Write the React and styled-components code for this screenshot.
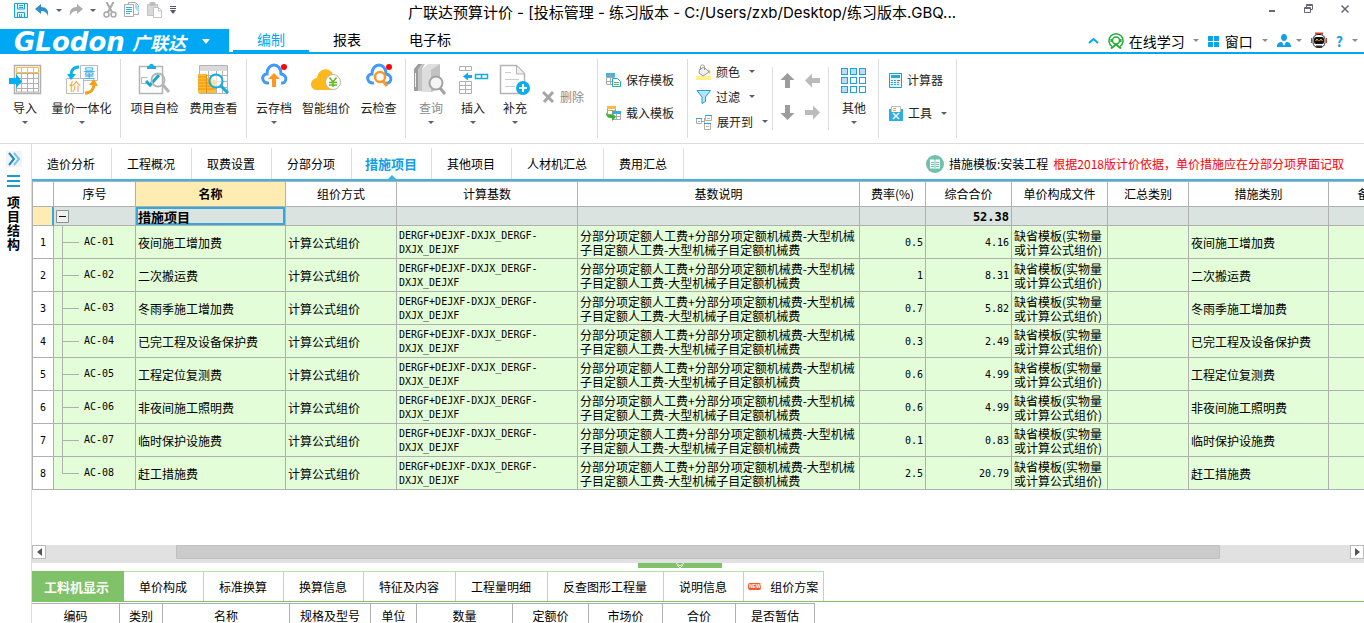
import React, { useState } from 'react';
import styled, { createGlobalStyle } from 'styled-components';

const RIBBON_TABS = ['编制', '报表', '电子标'];

const SHEET_TABS = ['造价分析', '工程概况', '取费设置', '分部分项', '措施项目', '其他项目', '人材机汇总', '费用汇总'];

const DETAIL_TABS = ['工料机显示', '单价构成', '标准换算', '换算信息', '特征及内容', '工程量明细', '反查图形工程量', '说明信息', '组价方案'];

const COLUMNS = [
  { title: '', width: 22 },
  { title: '序号', width: 82 },
  { title: '名称', width: 150, active: true },
  { title: '组价方式', width: 111 },
  { title: '计算基数', width: 181 },
  { title: '基数说明', width: 282 },
  { title: '费率(%)', width: 66 },
  { title: '综合合价', width: 86 },
  { title: '单价构成文件', width: 96 },
  { title: '汇总类别', width: 81 },
  { title: '措施类别', width: 140 },
  { title: '备注', width: 82 },
];

const ROWS = [
  { code: 'AC-01', name: '夜间施工增加费', rate: '0.5', total: '4.16' },
  { code: 'AC-02', name: '二次搬运费', rate: '1', total: '8.31' },
  { code: 'AC-03', name: '冬雨季施工增加费', rate: '0.7', total: '5.82' },
  { code: 'AC-04', name: '已完工程及设备保护费', rate: '0.3', total: '2.49' },
  { code: 'AC-05', name: '工程定位复测费', rate: '0.6', total: '4.99' },
  { code: 'AC-06', name: '非夜间施工照明费', rate: '0.6', total: '4.99' },
  { code: 'AC-07', name: '临时保护设施费', rate: '0.1', total: '0.83' },
  { code: 'AC-08', name: '赶工措施费', rate: '2.5', total: '20.79' },
];

const DETAIL_COLUMNS = [
  ['编码', 88],
  ['类别', 43],
  ['名称', 127],
  ['规格及型号', 81],
  ['单位', 46],
  ['数量', 96],
  ['定额价', 76],
  ['市场价', 74],
  ['合价', 73],
  ['是否暂估', 79],
];

const App = () => {
  const [ribbonTab, setRibbonTab] = useState('编制');
  const [sheetTab, setSheetTab] = useState('措施项目');
  const [detailTab, setDetailTab] = useState('工料机显示');

  return (
    <Window>
      <GlobalStyle />
      <TitleBar>
        <QuickAccess>
          <IconButton aria-label="保存"><SaveIcon /></IconButton>
          <IconButton aria-label="撤销"><UndoIcon color="#2b8fd0" /></IconButton>
          <IconButton aria-label="撤销列表"><Caret /></IconButton>
          <IconButton aria-label="恢复"><RedoIcon /></IconButton>
          <IconButton aria-label="恢复列表"><Caret /></IconButton>
          <IconButton aria-label="剪切"><CutIcon /></IconButton>
          <IconButton aria-label="复制"><CopyIcon /></IconButton>
          <IconButton aria-label="粘贴"><PasteIcon /></IconButton>
          <IconButton aria-label="自定义"><MoreIcon /></IconButton>
        </QuickAccess>
        <Title>广联达预算计价 - [投标管理 - 练习版本 - C:/Users/zxb/Desktop/练习版本.GBQ...</Title>
        <WindowButtons>
          <IconButton aria-label="最小化">
            <svg width="10" height="10"><path d="M1 7h6" stroke="#667" strokeWidth="2" /></svg>
          </IconButton>
          <IconButton aria-label="还原">
            <svg width="10" height="10" fill="none" stroke="#667"><path d="M2.5 3V.5h6v5H7M.5 3.5h6v5h-6zM.5 4.5h6M2.5 1.5h6" /></svg>
          </IconButton>
          <IconButton aria-label="关闭">
            <svg width="10" height="10"><path d="M1.500 1.500l7 7m0-7l-7 7" stroke="#667" strokeWidth="1.500" /></svg>
          </IconButton>
        </WindowButtons>
      </TitleBar>

      <MenuBar>
        <Brand>
          <BrandLatin>GLodon</BrandLatin>
          <BrandChinese>广联达</BrandChinese>
          <BrandCaret width="8" height="5"><path d="M0 0h8l-4 5z" fill="#fff" /></BrandCaret>
        </Brand>
        <RibbonTabs>
          {RIBBON_TABS.map((tab) => (
            <RibbonTab key={tab} $active={tab === ribbonTab} onClick={() => setRibbonTab(tab)}>{tab}</RibbonTab>
          ))}
        </RibbonTabs>
        <Tools>
          <Tool aria-label="收起功能区">
            <svg width="11" height="7"><path d="M1 6l4.500-4L10 6" fill="none" stroke="#00a8f3" strokeWidth="2" /></svg>
          </Tool>
          <Tool><HeadsetIcon />在线学习<Caret $light $gap={3} /></Tool>
          <Tool>
            <svg width="12" height="12" fill="#0aa5ef"><path d="M0 1h5v5H0zM6 1h5v5H6zM0 7h5v5H0zM6 7h5v5H6z" /></svg>
            窗口<Caret $light $gap={4} />
          </Tool>
          <Tool aria-label="用户"><UserIcon /><Caret $light /></Tool>
          <Tool aria-label="助手"><RobotIcon /></Tool>
          <Tool aria-label="帮助"><Question>?</Question><Caret $light $gap={4} /></Tool>
        </Tools>
      </MenuBar>

      <Ribbon>
        <Group>
          <BigButton $width={42}><ImportIcon /><Label>导入</Label><Caret /></BigButton>
          <BigButton $width={71}><PriceIcon /><Label>量价一体化</Label><Caret /></BigButton>
        </Group>
        <Group>
          <BigButton $width={59}><CheckIcon /><Label>项目自检</Label></BigButton>
          <BigButton $width={59}><FeeIcon /><Label>费用查看</Label></BigButton>
        </Group>
        <Group>
          <BigButton $width={46}><CloudIcon mark="arrow" /><Label>云存档</Label><Caret /></BigButton>
          <BigButton $width={58}><SmartIcon /><Label>智能组价</Label></BigButton>
          <BigButton $width={47}><CloudIcon mark="search" /><Label>云检查</Label></BigButton>
        </Group>
        <Group>
          <BigButton $width={42} $muted><BooksIcon /><Label>查询</Label><Caret /></BigButton>
          <BigButton $width={42}><InsertIcon /><Label>插入</Label><Caret /></BigButton>
          <BigButton $width={42}><AddIcon /><Label>补充</Label><Caret /></BigButton>
          <Stack $width={58} $indent={6}>
            <SmallButton $muted>
              <svg width="13" height="14"><path d="M1 2l10 10M11 2L2 12" stroke="#a5a5a5" strokeWidth="3" /></svg>
              删除
            </SmallButton>
          </Stack>
        </Group>
        <Group>
          <Stack $width={82} $gap={17} $indent={4}>
            <SmallButton><SaveTemplateIcon />保存模板</SmallButton>
            <SmallButton><LoadTemplateIcon />载入模板</SmallButton>
          </Stack>
        </Group>
        <Group $short>
          <Stack $width={77} $gap={9} $indent={4}>
            <SmallButton><BucketIcon />颜色<Caret $gap={4} /></SmallButton>
            <SmallButton>
              <svg width="15" height="16"><path d="M1 1.500h13.500L9.500 8v4.500L6 14.500V8z" fill="#b9e3f5" stroke="#18a4dd" /></svg>
              过滤<Caret $gap={4} />
            </SmallButton>
            <SmallButton><ExpandIcon />展开到<Caret $gap={4} /></SmallButton>
          </Stack>
        </Group>
        <Group $short>
          <ArrowPad>
            <IconButton aria-label="上移"><MoveIcon angle={0} color="#9c9c9c" /></IconButton>
            <IconButton aria-label="升级"><MoveIcon angle={-90} color="#bbb" /></IconButton>
            <IconButton aria-label="下移"><MoveIcon angle={180} color="#9c9c9c" /></IconButton>
            <IconButton aria-label="降级"><MoveIcon angle={90} color="#bbb" /></IconButton>
          </ArrowPad>
        </Group>
        <Group>
          <BigButton $width={42}><OtherIcon /><Label>其他</Label><Caret /></BigButton>
        </Group>
        <Group>
          <Stack $width={70} $gap={17} $indent={6}>
            <SmallButton><CalculatorIcon />计算器</SmallButton>
            <SmallButton><ToolboxIcon />工具<Caret $gap={4} /></SmallButton>
          </Stack>
        </Group>
      </Ribbon>

      <Workspace>
        <Sidebar>
          <IconButton aria-label="展开">
            <svg width="16" height="16" fill="none" strokeWidth="2">
              <rect width="16" height="16" fill="#f3f3f3" />
              <path d="M3 2l5 6-5 6" stroke="#168ac4" />
              <path d="M8 2l5 6-5 6" stroke="#7cc4e6" />
            </svg>
          </IconButton>
          <IconButton aria-label="列表">
            <svg width="13" height="12"><path d="M0 1h13M0 6h13M0 11h13" stroke="#1b9ad6" strokeWidth="2" /></svg>
          </IconButton>
          <SidebarLabel>项目结构</SidebarLabel>
        </Sidebar>

        <Main>
          <SheetBar>
            {SHEET_TABS.map((tab) => (
              <SheetTab key={tab} $active={tab === sheetTab} onClick={() => setSheetTab(tab)}>{tab}</SheetTab>
            ))}
            <Notice>
              <BookIcon />
              <span>措施模板:安装工程</span>
              <Warning>根据2018版计价依据，单价措施应在分部分项界面记取</Warning>
            </Notice>
          </SheetBar>

          <GridArea>
            <Grid>
              <colgroup>
                {COLUMNS.map((col) => <Col key={col.title} $width={col.width} />)}
              </colgroup>
              <thead>
                <tr>
                  {COLUMNS.map((col) => <HeadCell key={col.title} $active={col.active}>{col.title}</HeadCell>)}
                </tr>
              </thead>
              <tbody>
                <SummaryRow>
                  <MarkerCell />
                  <TreeCell>
                    <Tree>
                      <Collapse aria-label="折叠">
                        <svg width="13" height="13"><path d="M.5.5h12v12H.5z" fill="#eef0f0" stroke="#8d9191" /><path d="M3 6.500h7" stroke="#111" /></svg>
                      </Collapse>
                    </Tree>
                  </TreeCell>
                  <SelectedCell>措施项目</SelectedCell>
                  <Cell /><Cell /><Cell /><Cell />
                  <TotalCell>52.38</TotalCell>
                  <Cell /><Cell /><Cell /><Cell />
                </SummaryRow>
                {ROWS.map((row, i) => (
                  <DataRow key={row.code}>
                    <IndexCell>{i + 1}</IndexCell>
                    <TreeCell>
                      <Tree>
                        <Branch $last={i === ROWS.length - 1} />
                        {row.code}
                      </Tree>
                    </TreeCell>
                    <Cell>{row.name}</Cell>
                    <Cell>计算公式组价</Cell>
                    <CodeCell>DERGF+DEJXF-DXJX_DERGF-<br />DXJX_DEJXF</CodeCell>
                    <Cell>分部分项定额人工费+分部分项定额机械费-大型机械<br />子目定额人工费-大型机械子目定额机械费</Cell>
                    <NumberCell>{row.rate}</NumberCell>
                    <NumberCell>{row.total}</NumberCell>
                    <Cell>缺省模板(实物量<br />或计算公式组价)</Cell>
                    <Cell />
                    <Cell>{row.name}</Cell>
                    <Cell />
                  </DataRow>
                ))}
              </tbody>
            </Grid>
          </GridArea>

          <ScrollBar>
            <ScrollButton aria-label="向左滚动"><svg width="5" height="8"><path d="M5 0v8L0 4z" fill="#555" /></svg></ScrollButton>
            <ScrollTrack><ScrollThumb /></ScrollTrack>
            <ScrollButton aria-label="向右滚动"><svg width="5" height="8"><path d="M0 0v8l5-4z" fill="#555" /></svg></ScrollButton>
          </ScrollBar>

          <Splitter>
            <SplitterHandle aria-label="收起明细">
              <svg width="10" height="6" fill="none" stroke="#e3f6da"><path d="M1 0l4 3 4-3M2 2l3 3 3-3" /></svg>
            </SplitterHandle>
          </Splitter>

          <DetailPanel>
            <DetailTabs>
              {DETAIL_TABS.map((tab) => (
                <DetailTab
                  key={tab}
                  $active={tab === detailTab}
                  $badge={tab === '组价方案'}
                  onClick={() => setDetailTab(tab)}
                >
                  {tab === '组价方案' && <NewBadge />}
                  {tab}
                </DetailTab>
              ))}
            </DetailTabs>
            <DetailGrid>
              <thead>
                <tr>
                  {DETAIL_COLUMNS.map(([title, width]) => <DetailHead key={title} $width={width}>{title}</DetailHead>)}
                </tr>
              </thead>
            </DetailGrid>
          </DetailPanel>
        </Main>
      </Workspace>
    </Window>
  );
};

export default App;

/* 图标 */

const SaveIcon = () => (
  <svg width="14" height="15" fill="none" stroke="#12a5dc">
    <path d="M.5.5h13v14H.5z" fill="#e4f5fc" />
    <path d="M3.500 1v5h7V1M3.500 14V9.500h7V14M5 2.500h4M5 4.500h4" />
    <path d="M5.500 11v3h2v-3" stroke="#888" />
  </svg>
);

const UndoIcon = ({ color, flip }) => (
  <svg width="14" height="13">
    <path
      d="M0 5l6-5v3c5 0 8 3 7 9-1-3-3-5-7-5v3z"
      fill={color}
      transform={flip ? 'matrix(-1 0 0 1 14 0)' : undefined}
    />
  </svg>
);

const RedoIcon = () => <UndoIcon color="#adadad" flip />;

const CutIcon = () => (
  <svg width="14" height="16" fill="none" stroke="#a9a9a9">
    <path d="M3.500 0l6 11M10.500 0l-6 11" strokeWidth="2" />
    <circle cx="3.500" cy="12.500" r="2.500" strokeWidth="1.500" />
    <circle cx="10.500" cy="12.500" r="2.500" strokeWidth="1.500" />
  </svg>
);

const CopyIcon = () => (
  <svg width="16" height="16" fill="#fff" stroke="#aaa">
    <path d="M4.500.500h7l3 3v9h-10z" />
    <path d="M11 1l4 4v6l-4-5z" fill="#a7dcf2" stroke="none" />
    <path d="M.5 2.500h9v12H.5z" />
    <path d="M2 5.500h6M2 7.500h6M2 9.500h6M2 11.500h4" stroke="#2aaee0" />
  </svg>
);

const PasteIcon = () => (
  <svg width="16" height="16" fill="none" stroke="#c2c2c2">
    <path d="M.5 2.500h10v11H.5z" fill="#d8d8d8" />
    <path d="M3 .500h5v3H3z" fill="#bbb" />
    <path d="M6.500 5.500h5l3 3v7h-8z" fill="#fff" />
    <path d="M11.500 6v3h3" />
  </svg>
);

const MoreIcon = () => (
  <svg width="6" height="8" fill="#555868"><path d="M0 0h6v1H0zM0 2h6v1H0zM0 4h6L3 8z" /></svg>
);

const HeadsetIcon = () => (
  <svg width="16" height="16" fill="none" stroke="#22ad38">
    <path d="M4 13.500a7 7 0 118 0" strokeWidth="1.500" />
    <circle cx="8" cy="7.500" r="3.500" strokeWidth="1.500" />
    <path d="M3.500 6v3M12.500 6v3" strokeWidth="2" />
    <path d="M3 15.500l5-4 5 4" strokeWidth="2" />
  </svg>
);

const UserIcon = () => (
  <svg width="14" height="13" fill="#109fe8">
    <path d="M7 0c4 0 4 7 0 7s-4-7 0-7zM0 13c0-4 2-5 5-5l2 4 2-4c3 0 5 1 5 5z" />
  </svg>
);

const RobotIcon = () => (
  <svg width="16" height="17">
    <path d="M4 1.500h8" stroke="#d23c22" strokeWidth="2" />
    <rect x="2" y="2.500" width="12" height="13" rx="5" fill="#fff" stroke="#242424" />
    <path d="M.5 6v5M15.500 6v5" stroke="#c4402b" />
    <rect x="3" y="5" width="10" height="7" rx="2" fill="#111" />
    <path d="M4.500 9L6 7l1.500 2M8.500 9L10 7l1.500 2" fill="none" stroke="#e5cd37" />
    <path d="M5 14.500h6" stroke="#333" strokeWidth="2" />
  </svg>
);

const ImportIcon = () => (
  <svg width="36" height="34" fill="none" stroke="#b0b0b0">
    <path d="M7.500 4.500h26v28h-26z" strokeWidth="1.500" />
    <path d="M9 12.500h23M9 17.500h23M9 22.500h23M9 27.500h23M14.500 7v24M20.500 7v24M26.500 7v24M9.500 12v19h22V12" />
    <path d="M9.500 6.500h22v5h-22zM14.500 7v4M20.500 7v4M26.500 7v4" stroke="#ffbd43" />
    <path d="M2 17h7v-4l6 7.500L9 27v-4H2z" fill="#00b1f2" stroke="none" />
  </svg>
);

const PriceIcon = () => (
  <svg width="36" height="34" fill="none">
    <path d="M16.500 4.500h17v15h-17z" stroke="#bbb" />
    <path d="M2.500 17.500h17v15h-17z" fill="#fff" stroke="#bbb" />
    <IconText x="19" y="17" fill="#16a9e8">量</IconText>
    <IconText x="5" y="30" fill="#f7a021">价</IconText>
    <path d="M15 6c-6 0-8 4-8 8" stroke="#06b3ee" strokeWidth="3" />
    <path d="M3 13h9l-5 6z" fill="#06b3ee" />
    <path d="M21 32c6 0 9-4 9-9" stroke="#f99d13" strokeWidth="3" />
    <path d="M25 24l5-6 4 7z" fill="#f99d13" />
  </svg>
);

const CheckIcon = () => (
  <svg width="36" height="34" fill="none" stroke="#b4b4b4">
    <path d="M2.500 5.500h23v27h-23z" strokeWidth="1.500" />
    <path d="M10 8V5h2c1-3 4-3 5 0h2v3z" fill="#19b0e8" stroke="none" />
    <path d="M10.500 16.500h-6v6h6" />
    <path d="M9 20l4 4 9-10" stroke="#12a5dc" strokeWidth="3" />
    <circle cx="21" cy="19" r="6.500" strokeWidth="2" />
    <path d="M26 24l6 7" strokeWidth="3" />
  </svg>
);

const FeeIcon = () => (
  <svg width="36" height="34" fill="none">
    <path d="M3.500 4.500h28v28h-28zM3 14.500h28M3 20.500h28M3 26.500h28M12.500 9v23M20.500 9v23M26.500 9v23" stroke="#b4b4b4" />
    <path d="M4 5h27v5H4z" fill="#dadada" />
    <path d="M2 13h9v4h5v2h4v13H2z" fill="#ffbb35" />
    <path d="M2 16h8M2 19h8M2 22h17M2 25h17M2 28h17M10.500 14v18" stroke="#e8930c" />
    <circle cx="20" cy="20" r="6.500" fill="#fff" fillOpacity=".6" stroke="#10abe6" strokeWidth="2" />
    <path d="M25 25l7 7" stroke="#10abe6" strokeWidth="3" />
  </svg>
);

const CloudIcon = ({ mark }) => (
  <svg width="36" height="34" fill="none">
    <path d="M13 22c-8 1-8-9-2-9 0-12 14-12 14 0 7 1 6 10 0 9" stroke="#4199fb" strokeWidth="3" />
    <circle cx="28" cy="6" r="3" fill="#f8060c" />
    {mark === 'arrow' ? (
      <path d="M18 12l6 6h-4v8h-4v-8h-4z" fill="#ff9822" />
    ) : (
      <>
        <circle cx="19" cy="16" r="5" fill="#fff" stroke="#ff9822" strokeWidth="2.500" />
        <path d="M22 20l4 5" stroke="#ff9822" strokeWidth="3" />
      </>
    )}
  </svg>
);

const SmartIcon = () => (
  <svg width="36" height="34" fill="none">
    <path d="M9 29C1 29 1 18 9 17c2-12 15-11 17-1v13z" fill="#fdb91b" />
    <circle cx="25" cy="21" r="7.500" fill="#fff" stroke="#b9b6a8" />
    <path d="M21.500 16.500L25 21l3.500-4.500M21 21.500h8M21 24h8M25 21v5" stroke="#64b81e" strokeWidth="1.500" />
  </svg>
);

const BooksIcon = () => (
  <svg width="36" height="34">
    <path d="M1 8l4-5h4v27H1z" fill="#9d9d9d" />
    <path d="M2.500 12v14" stroke="#eee" />
    <path d="M5 8l4-5h3l-3 5v22H5z" fill="#c4c4c4" />
    <path d="M9 8l6-5h12v24l-8 4H9z" fill="#ddd" />
    <path d="M18 9l9-6v24l-9 4z" fill="#c2c2c2" />
    <circle cx="23" cy="22" r="6.500" fill="#f5f5f5" stroke="#a4a4a4" strokeWidth="2" />
    <path d="M27 27l5 6" stroke="#a4a4a4" strokeWidth="3" />
  </svg>
);

const InsertIcon = () => (
  <svg width="36" height="34" fill="none" stroke="#b0b0b0">
    <path d="M4.500 5.500h12v4h-12zM10.500 5v4M4.500 20.500h12v12h-12zM10.500 20v12M4 24.500h12M4 28.500h12" />
    <path d="M20.500 13.500h12v4h-12zM26.500 13v4" stroke="#11ade8" strokeWidth="1.500" />
    <path d="M8 15.500l5-4V14h4v3h-4v2.500z" fill="#11ade8" stroke="none" />
  </svg>
);

const AddIcon = () => (
  <svg width="36" height="34" fill="none" stroke="#b4b4b4">
    <path d="M3.500 4.500h16l8 8v20h-24z" strokeWidth="1.500" />
    <path d="M19.500 5v8h8" fill="#eee" />
    <path d="M8 11.500h6M8 18.500h14M8 25.500h10" stroke="#ccc" />
    <circle cx="26" cy="27" r="7" fill="#0caeea" stroke="none" />
    <path d="M22 27h8M26 23v8" stroke="#fff" strokeWidth="2" />
  </svg>
);

const SaveTemplateIcon = () => (
  <svg width="15" height="16" fill="none">
    <path d="M0 1h9v4H0z" fill="#3db6e4" />
    <path d="M.5 5.500h8v7h-8zM.5 9.500h8M4.500 2v10" stroke="#a9a9a9" />
    <path d="M6.500 6.500h5l3 3v5h-8z" fill="#fff" stroke="#1aa5dc" />
    <path d="M8 10.500h5M8 12.500h5" stroke="#67b93a" />
  </svg>
);

const LoadTemplateIcon = () => (
  <svg width="15" height="16" fill="none">
    <path d="M1.500 1.500h8v8h-8zM1 5.500h8" stroke="#c9a24b" />
    <path d="M1 1h9v3H1z" fill="#fdba3f" />
    <path d="M6.500 7.500h8v7h-8zM6 11.500h8M10.500 8v6" fill="#fff" stroke="#aaa" />
    <path d="M6 6h9v3H6z" fill="#38aedd" />
    <path d="M0 7c1 3 3 3 6 3V8l4 4-4 4v-3c-5 0-6-2-6-6z" fill="#3eb03a" />
  </svg>
);

const BucketIcon = () => (
  <svg width="15" height="16" fill="none">
    <path d="M0 12h15v4H0z" fill="#fff08a" />
    <path d="M3.500 5.500L8 3l5 5-6 4-4-3z" fill="#f1f1f1" stroke="#999" />
    <path d="M4.500 6V2.500c0-2 4-2 4 0V6" stroke="#999" />
    <path d="M12 5c2 1 3 3 2 6l-1-3z" fill="#e3c200" />
  </svg>
);

const ExpandIcon = () => (
  <svg width="16" height="16" fill="#fff" stroke="#b3aca0">
    <path d="M6 7.500h3M8.500 4v8" stroke="#aaa" />
    <path d="M.5 4.500h5v5h-5zM9.500 1.500h6v5h-6zM8.500 9.500h6v6h-6z" />
    <path d="M0 4.500h6M9 1.500h7M8 9.500h7" stroke="#2ea6da" />
    <path d="M2 7.500h2M11 4.500h3M10 12.500h3" />
  </svg>
);

const MoveIcon = ({ angle, color }) => (
  <svg width="15" height="15">
    <path d="M7.500 0l7 7H10v8H5V7H.5z" fill={color} transform={`rotate(${angle} 7.500 7.500)`} />
  </svg>
);

const OtherIcon = () => (
  <svg width="36" height="34" stroke="#16a5dd">
    {[8, 17, 26].map((y, row) => [6, 15, 24].map((x, col) => (
      <rect
        key={`${x}-${y}`}
        x={x - 0.5}
        y={y - 0.5}
        width="6"
        height="6"
        fill={row === 0 || col === 0 ? '#bfdcf2' : '#fff'}
      />
    )))}
  </svg>
);

const CalculatorIcon = () => (
  <svg width="13" height="15" fill="none">
    <path d="M.5.500h12v14H.5z" fill="#e6f6fc" stroke="#14a1d8" />
    <path d="M2 2h9v3H2z" fill="#22a9de" />
    <path d="M2 7.500h9M2 9.500h9M2 11.500h9" stroke="#2ba9dc" strokeDasharray="2 1" />
    <path d="M9 7.500h2" stroke="#e33" />
  </svg>
);

const ToolboxIcon = () => (
  <svg width="14" height="15" fill="none">
    <path d="M2.500.500h9v6h-9z" fill="#fff" stroke="#bbb" />
    <path d="M4 2.500h3M4 4.500h3" stroke="#f5a623" />
    <path d="M0 3h2v3h10V3h2v12H0z" fill="#2bb0e6" />
    <path d="M4 7l6 6M10 7l-6 6" stroke="#fff" strokeWidth="1.500" />
  </svg>
);

const BookIcon = () => (
  <svg width="18" height="18" fill="none">
    <circle cx="9" cy="9" r="9" fill="#6fc1ab" />
    <path d="M4 4.500h4l1 1 1-1h4v9h-4l-1 1-1-1H4z" fill="#fff" />
    <path d="M5 7.500h3M5 9.500h3M5 11.500h3M10 7.500h3M10 9.500h3M10 11.500h3M9 5.500v9" stroke="#6fc1ab" />
  </svg>
);

const NewBadge = () => (
  <svg width="13" height="7" viewBox="0 0 13 7" fill="none">
    <rect width="13" height="7" rx="2" fill="#f4592b" />
    <BadgeText x="1" y="5">NEW</BadgeText>
  </svg>
);

const CaretSvg = ({ className }) => (
  <svg className={className} width="6" height="3"><path d="M0 0h6L3 3z" /></svg>
);

/* 样式 */

const GlobalStyle = createGlobalStyle`
  * {
    box-sizing: border-box;
  }

  body {
    margin: 0;
    background: #fff;
    color: #000;
    font-family: 'Noto Sans CJK SC', 'Liberation Sans', sans-serif;
    font-size: 12px;
    line-height: 16px;
  }

  button {
    margin: 0;
    padding: 0;
    border: 0;
    background: none;
    color: inherit;
    font: inherit;
    white-space: nowrap;
    cursor: pointer;
  }

  svg {
    display: block;
    flex-shrink: 0;
  }
`;

const Caret = styled(CaretSvg)`
  fill: ${({ $light }) => ($light ? '#8a8c96' : '#5d5f6e')};
  margin-left: ${({ $gap }) => $gap || 0}px;
`;

const IconText = styled.text`
  font-size: 12px;
`;

const BadgeText = styled.text`
  fill: #fff;
  font: bold 5px 'Liberation Sans', sans-serif;
`;

const Window = styled.div`
  display: flex;
  flex-direction: column;
  height: 100vh;
  overflow: hidden;
`;

const TitleBar = styled.header`
  display: grid;
  grid-template-columns: 1fr auto 1fr;
  flex-shrink: 0;
  height: 29px;
`;

const QuickAccess = styled.div`
  display: flex;
  align-items: center;
  gap: 7px;
  height: 20px;
  padding-left: 14px;
`;

const IconButton = styled.button`
  display: flex;
  align-items: center;
  justify-content: center;
`;

const Title = styled.h1`
  margin: 0;
  font-family: Inter, 'Noto Sans CJK SC', sans-serif;
  font-size: 15px;
  font-weight: 400;
  line-height: 26px;
  white-space: nowrap;
`;

const WindowButtons = styled.div`
  display: flex;
  align-items: center;
  justify-content: flex-end;
  gap: 26px;
  height: 18px;
  padding-right: 14px;
`;

const MenuBar = styled.nav`
  display: flex;
  flex-shrink: 0;
  height: 25px;
  border-bottom: 2px solid #00a8f3;
`;

const Brand = styled.button`
  display: flex;
  align-items: center;
  width: 229px;
  height: 25px;
  margin-right: 4px;
  padding-left: 14px;
  background: #00a8f3;
  color: #fff;
  font-style: italic;
  font-weight: 700;
`;

const BrandLatin = styled.span`
  width: 118px;
  font-family: 'DejaVu Sans', sans-serif;
  font-size: 26px;
  line-height: 24px;
  text-align: left;
`;

const BrandChinese = styled.span`
  font-size: 18px;
  line-height: 24px;
`;

const BrandCaret = styled.svg`
  margin-left: 16px;
`;

const RibbonTabs = styled.div`
  display: flex;
`;

const RibbonTab = styled.button`
  height: 23px;
  padding: 0 24px;
  border-bottom: 2px solid ${({ $active }) => ($active ? '#00a8f3' : 'transparent')};
  color: ${({ $active }) => ($active ? '#00a8f3' : '#000')};
  font-size: 14px;
  line-height: 21px;
`;

const Tools = styled.div`
  display: flex;
  align-items: center;
  gap: 9px;
  margin-left: auto;
  padding-right: 6px;
`;

const Tool = styled.button`
  display: flex;
  align-items: center;
  gap: 5px;
  font-size: 14px;
`;

const Question = styled.span`
  color: #109fe8;
  font-weight: 700;
`;

const Ribbon = styled.div`
  display: flex;
  flex-shrink: 0;
  height: 90px;
  padding: 5px 0;
  border-bottom: 1px solid #ddd;
`;

const Group = styled.div`
  display: flex;
  margin: ${({ $short }) => ($short ? '8px 0' : 0)};
  padding: 0 3px 0 4px;
  border-right: 1px solid #ddd;
  height: ${({ $short }) => ($short ? '63px' : '79px')};
`;

const BigButton = styled.button`
  display: flex;
  flex-direction: column;
  align-items: center;
  width: ${({ $width }) => $width}px;
  padding-top: 2px;
  color: ${({ $muted }) => ($muted ? '#8a8a8a' : '#222')};
`;

const Label = styled.span`
  margin: 5px 0;
`;

const Stack = styled.div`
  display: flex;
  flex-direction: column;
  justify-content: center;
  gap: ${({ $gap }) => $gap || 0}px;
  width: ${({ $width }) => $width}px;
  padding: 0 0 4px ${({ $indent }) => $indent}px;
`;

const SmallButton = styled.button`
  display: flex;
  align-items: center;
  gap: 5px;
  color: ${({ $muted }) => ($muted ? '#8a8a8a' : '#222')};
`;

const ArrowPad = styled.div`
  display: grid;
  grid-template-columns: 15px 15px;
  gap: 17px 10px;
  align-content: center;
  width: 48px;
  padding: 0 0 4px 3px;
`;

const Workspace = styled.div`
  display: flex;
  flex: 1;
  min-height: 0;
`;

const Sidebar = styled.aside`
  display: flex;
  flex-direction: column;
  align-items: center;
  gap: 8px;
  width: 32px;
  flex-shrink: 0;
  padding: 7px 4px 0 0;
  border-right: 1px solid #ddd;
`;

const SidebarLabel = styled.div`
  width: 13px;
  font-size: 13px;
  font-weight: 700;
  line-height: 14px;
`;

const Main = styled.main`
  display: flex;
  flex: 1;
  flex-direction: column;
  min-width: 0;
`;

const SheetBar = styled.div`
  display: flex;
  flex-shrink: 0;
  height: 37px;
  padding-top: 4px;
  border-bottom: 2px solid #41b3e2;
`;

const SheetTab = styled.button`
  position: relative;
  padding: ${({ $active }) => ($active ? '0 14px 0 13px' : '0 16px 0 15px')};
  border-right: 1px solid #ddd;
  color: ${({ $active }) => ($active ? '#109fe8' : '#000')};
  font-size: ${({ $active }) => ($active ? '13px' : '12px')};
  font-weight: ${({ $active }) => ($active ? 700 : 400)};

  &::after {
    content: '';
    display: ${({ $active }) => ($active ? 'block' : 'none')};
    position: absolute;
    bottom: 0;
    left: 50%;
    margin-left: -4px;
    border: 4px solid transparent;
    border-top: 0;
    border-bottom-color: #41b3e2;
  }
`;

const Notice = styled.div`
  display: flex;
  align-items: center;
  gap: 5px;
  margin-left: auto;
  padding-right: 20px;
  white-space: nowrap;
`;

const Warning = styled.span`
  color: #f00;
`;

const GridArea = styled.div`
  flex: 1;
  min-height: 0;
  overflow: hidden;
`;

const Grid = styled.table`
  width: 1379px;
  table-layout: fixed;
  border-collapse: separate;
  border-spacing: 0;
  line-height: 14px;
`;

const Col = styled.col`
  width: ${({ $width }) => $width}px;
`;

const HeadCell = styled.th`
  height: 26px;
  padding: 0;
  border: 1px solid #b0b0b0;
  border-left-width: 0;
  background: ${({ $active }) => ($active ? '#ffecb3' : '#fff')};
  font-weight: ${({ $active }) => ($active ? 700 : 400)};

  &:first-child {
    border-left-width: 1px;
  }
`;

const Cell = styled.td`
  height: 33px;
  padding: 2px 0 0 2px;
  border-right: 1px solid #b0b0b0;
  border-bottom: 1px solid #b0b0b0;
  white-space: nowrap;
`;

const CodeCell = styled(Cell)`
  font-family: 'DejaVu Sans Mono', monospace;
  font-size: 10px;
`;

const SummaryRow = styled.tr`
  background: #dae3df;

  td {
    height: 19px;
  }
`;

const DataRow = styled.tr`
  background: #e2fdd8;
`;

const MarkerCell = styled(Cell)`
  border-left: 1px solid #b0b0b0;
  border-right: 2px solid #35a8da;
  background: #ffecb3;
`;

const SelectedCell = styled(Cell)`
  box-shadow: inset 0 0 0 2px #35a8da;
  font-size: 13px;
  font-weight: 700;
`;

const IndexCell = styled(CodeCell)`
  padding: 2px 0 0;
  border-left: 1px solid #b0b0b0;
  background: #fff;
  text-align: center;
`;

const TreeCell = styled(CodeCell)`
  padding: 0;
`;

const Tree = styled.div`
  display: flex;
  align-items: center;
`;

const Collapse = styled(IconButton)`
  margin-left: 2px;
`;

/* 树形连接线：横线居中，最后一行不再向下延伸 */
const Branch = styled.span`
  display: block;
  width: 17px;
  height: 32px;
  margin: 0 5px 0 8px;
  background:
    linear-gradient(#b0b0b0, #b0b0b0) 0 16px / 17px 1px no-repeat,
    linear-gradient(#b0b0b0, #b0b0b0) 0 0 / 1px ${({ $last }) => ($last ? '16px' : '32px')} no-repeat;
`;

const NumberCell = styled(CodeCell)`
  padding: 2px 2px 0 0;
  text-align: right;
`;

const TotalCell = styled(NumberCell)`
  font-size: 12px;
  font-weight: 700;
`;

const ScrollBar = styled.div`
  display: flex;
  flex-shrink: 0;
  height: 18px;
  padding-bottom: 4px;
  background: #e1e1e1;
`;

const ScrollButton = styled.button`
  display: flex;
  align-items: center;
  justify-content: center;
  width: 14px;
  height: 14px;
  border: 1px solid #bbb;
  background: #fff;
`;

const ScrollTrack = styled.div`
  flex: 1;
`;

const ScrollThumb = styled.div`
  width: 80%;
  height: 14px;
  margin-left: 10%;
  border: 1px solid #c0c0c0;
  border-radius: 1px;
  background: #cbcbcb;
`;

const Splitter = styled.div`
  display: flex;
  justify-content: center;
  flex-shrink: 0;
  height: 8px;
  padding-right: 36px;
`;

const SplitterHandle = styled.button`
  display: flex;
  align-items: center;
  justify-content: center;
  width: 84px;
  height: 5px;
  background: #80c269;
`;

const DetailPanel = styled.section`
  flex-shrink: 0;
  height: 52px;
  overflow: hidden;
`;

const DetailTabs = styled.div`
  display: flex;
  height: 31px;
  margin-bottom: 1px;
  border-bottom: 1px solid #7cc566;
`;

const DetailTab = styled.button`
  display: flex;
  align-items: center;
  gap: 9px;
  padding: ${({ $active, $badge }) => {
    if ($active) return '0 14px 0 12px';
    return $badge ? '0 5px 0 4px' : '0 16px 0 15px';
  }};
  border-top: 1px solid #b5e0a3;
  border-right: 1px solid #b5e0a3;
  font-size: 12px;

  ${({ $active }) => $active && `
    border-color: #80c269;
    background: #80c269;
    color: #fff;
    font-size: 13px;
    font-weight: 700;
  `}
`;

const DetailGrid = styled.table`
  table-layout: fixed;
  border-collapse: separate;
  border-spacing: 0;
`;

const DetailHead = styled.th`
  width: ${({ $width }) => $width}px;
  height: 26px;
  padding: 0;
  border: 1px solid #b0b0b0;
  border-left-width: 0;
  font-weight: 400;
  white-space: nowrap;
`;
